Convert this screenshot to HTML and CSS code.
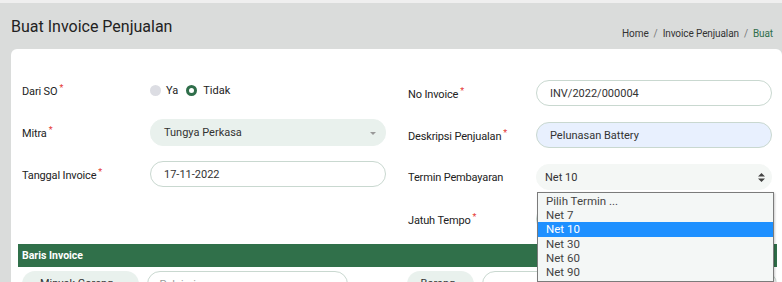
FILE: index.html
```html
<!DOCTYPE html>
<html lang="id">
<head>
    <meta charset="UTF-8">
    <meta name="viewport" content="width=device-width, initial-scale=1.0">
    <title>Buat Invoice Penjualan</title>
    <link rel="stylesheet" href="styles.css">
</head>
<body>
    <div class="page-head">
        <h1 class="page-title">Buat Invoice Penjualan</h1>
        <div class="crumbs">
            <a href="#">Home</a><span class="sep">/</span><a href="#">Invoice Penjualan</a><span class="sep">/</span><span class="active">Buat</span>
        </div>
    </div>

    <div class="card">
        <div class="form-grid">
            <div class="form-col">
                <div class="row">
                    <label>Dari SO<span class="req">*</span></label>
                    <div class="radios">
                        <span class="radio"></span><span class="radio-text">Ya</span>
                        <span class="radio checked"></span><span class="radio-text">Tidak</span>
                    </div>
                </div>
                <div class="row">
                    <label>Mitra<span class="req">*</span></label>
                    <div class="field fill">Tungya Perkasa<span class="caret"></span></div>
                </div>
                <div class="row">
                    <label>Tanggal Invoice<span class="req">*</span></label>
                    <div class="field">17-11-2022</div>
                </div>
            </div>

            <div class="form-col right">
                <div class="row">
                    <label>No Invoice<span class="req">*</span></label>
                    <div class="field">INV/2022/000004</div>
                </div>
                <div class="row">
                    <label>Deskripsi Penjualan<span class="req">*</span></label>
                    <div class="field autofill">Pelunasan Battery</div>
                </div>
                <div class="row">
                    <label>Termin Pembayaran</label>
                    <div class="field soft termin">Net 10
                        <svg class="updown" width="7" height="9" viewBox="0 0 7 9"><path d="M3.5 0L7 3.5H0z M3.5 9L0 5.5H7z" fill="#444"/></svg>
                        <ul class="options">
                            <li>Pilih Termin ...</li>
                            <li>Net 7</li>
                            <li class="selected">Net 10</li>
                            <li>Net 30</li>
                            <li>Net 60</li>
                            <li>Net 90</li>
                        </ul>
                    </div>
                </div>
                <div class="row">
                    <label>Jatuh Tempo<span class="req">*</span></label>
                    <div class="field"></div>
                </div>
            </div>
        </div>

        <div class="section-bar">Baris Invoice</div>

        <div class="line-row">
            <div class="pill tag wide">Minyak Goreng</div>
            <div class="pill input mid">Pelajari ...</div>
            <div class="pill tag small">Barang</div>
            <div class="pill input cells">
                <span>pcs</span><span>1</span><span>10.000</span><span>0</span><span>10.000</span>
            </div>
        </div>
    </div>
</body>
</html>
```

FILE: styles.css
```css
*{
    box-sizing: border-box;
}
body{
    margin: 0;
    width: 782px;
    height: 282px;
    overflow: hidden;
    background-color: #dadcdb;
    border-top: 3px solid #efefef;
    font-family: Roboto, "Liberation Sans", sans-serif;
    color: #222;
}
.page-head{
    display: flex;
    justify-content: space-between;
    align-items: flex-start;
    padding: 14px 9px 0 11px;
    height: 46px;
}
.page-title{
    margin: 0;
    font-size: 16px;
    font-weight: 400;
    color: #222;
}
.crumbs{
    margin-top: 11px;
    font-size: 10px;
    letter-spacing: -0.1px;
    color: #333;
}
.crumbs a{
    color: #333;
    text-decoration: none;
}
.crumbs .sep{
    margin: 0 5px;
    color: #777;
}
.crumbs .active{
    color: #2f6e4a;
}
.card{
    margin-left: 11px;
    background-color: #fff;
    border-radius: 6px 6px 0 0;
    padding: 28px 5px 0 7px;
    height: 240px;
}
.form-grid{
    display: grid;
    grid-template-columns: 364px 1fr;
    column-gap: 22px;
    padding-left: 4px;
}
.form-col{
    display: flex;
    flex-direction: column;
    gap: 16px;
}
.form-col.right{
    padding-top: 3px;
}
.row{
    display: flex;
    align-items: center;
    height: 26px;
}
.row label{
    width: 128px;
    flex: none;
    font-size: 11px;
    letter-spacing: -0.15px;
    color: #222;
}
.req{
    color: #e53935;
    font-size: 9px;
    vertical-align: 4px;
    margin-left: 2px;
}
.field{
    position: relative;
    width: 236px;
    height: 26px;
    border: 1px solid #c9d8d0;
    border-radius: 13px;
    padding: 0 13px;
    display: flex;
    align-items: center;
    font-size: 11px;
    color: #333;
}
.field.fill{
    background-color: #e9f1ed;
    border-color: #e9f1ed;
    height: 27px;
}
.field.autofill{
    background-color: #e8f0fe;
    border-color: #c9d8d0;
}
.field.soft{
    background-color: #f4f7f5;
    border-color: #f4f7f5;
    padding-left: 8px;
}
.caret{
    position: absolute;
    right: 9px;
    top: 12px;
    border-left: 3px solid transparent;
    border-right: 3px solid transparent;
    border-top: 3px solid #999;
}
.updown{
    position: absolute;
    right: 6px;
    top: 8px;
}
.radios{
    display: flex;
    align-items: center;
    font-size: 11px;
}
.radio{
    width: 11px;
    height: 11px;
    border-radius: 50%;
    background-color: #dcdde3;
    margin-right: 5px;
}
.radio.checked{
    background-color: #fff;
    border: 3px solid #2f6e4a;
    margin-left: 8px;
    margin-right: 6px;
}
.options{
    position: absolute;
    left: 0;
    top: 27px;
    width: 237px;
    margin: 0;
    padding: 1px 0 2px;
    list-style: none;
    background-color: #f4f7f6;
    border: 1px solid #7b7b7b;
    box-shadow: 1px 1px 2px rgba(0,0,0,0.2);
    z-index: 5;
}
.options li{
    height: 14.2px;
    line-height: 14px;
    padding-left: 8px;
    font-size: 11.5px;
    color: #444;
}
.options li.selected{
    background-color: #1e90ff;
    color: #fff;
}
.section-bar{
    margin-top: 12px;
    height: 23px;
    background-color: #30704a;
    color: #fff;
    font-size: 10.5px;
    font-weight: 700;
    line-height: 23px;
    padding-left: 4px;
}
.line-row{
    display: flex;
    gap: 8px;
    margin-top: 4px;
    padding-left: 4px;
}
.pill{
    height: 26px;
    border-radius: 13px;
    font-size: 11px;
    padding: 6px 12px 0;
    color: #333;
}
.pill.tag{
    background-color: #e9f1ed;
}
.pill.input{
    border: 1px solid #c9d8d0;
    color: #999;
}
.pill.wide{
    width: 118px;
    padding-left: 18px;
}
.pill.mid{
    width: 204px;
    margin-right: 51px;
}
.pill.small{
    width: 68px;
    padding-left: 14px;
}
.pill.cells{
    width: 300px;
    display: flex;
    gap: 0;
    padding: 6px 0 0;
}
.pill.cells span{
    flex: 1;
    border-left: 1px solid #ddd;
    padding-left: 10px;
}
.pill.cells span:first-child{
    border-left: none;
}
```
